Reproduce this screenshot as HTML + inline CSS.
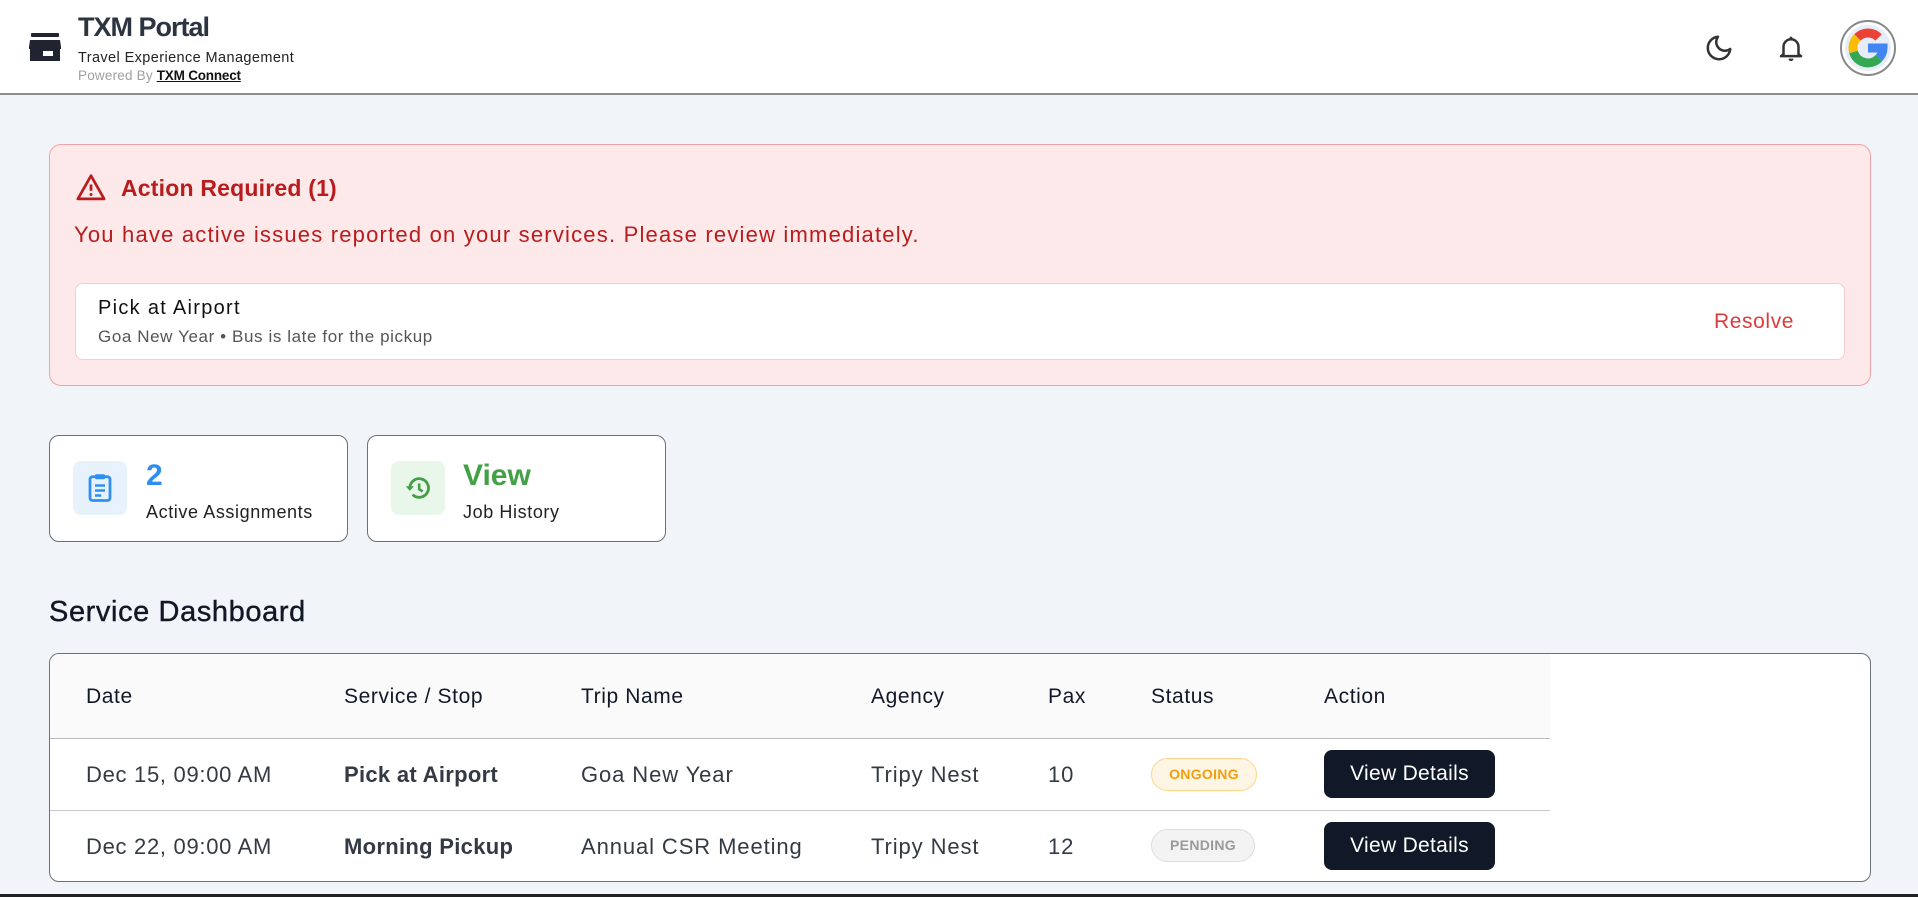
<!DOCTYPE html>
<html><head><meta charset="utf-8"><style>
*{box-sizing:border-box;margin:0;padding:0}
body{width:1918px;height:897px;overflow:hidden;background:#f1f4f8;font-family:"Liberation Sans",Roboto,sans-serif;position:relative;color:#111827}
.a{position:absolute;white-space:nowrap}
.hdr{position:absolute;left:0;top:0;width:1918px;height:95px;background:#fff;border-bottom:2px solid #8a8a8a}
.card{position:absolute;background:#fff;border:1.5px solid #6b6f76;border-radius:10px}
.th{position:absolute;top:685px;font-size:21px;color:#111827;letter-spacing:.6px}
.td{position:absolute;font-size:22px;color:#333a44;letter-spacing:.9px}
.badge{position:absolute;left:1151px;width:106px;height:33px;border-radius:17px;font-size:14px;font-weight:bold;text-align:center;line-height:31px;letter-spacing:.3px}
.btn{position:absolute;left:1324px;width:171px;height:48px;background:#111827;color:#fff;border-radius:8px;font-size:21px;text-align:center;line-height:48px;letter-spacing:.3px}
</style></head><body>
<div class="hdr"></div>
<svg class="a" style="left:29px;top:33px" width="32" height="28" viewBox="0 0 32 28"><rect x="2" y="0" width="28" height="4" rx="1" fill="#1f2430"/><path d="M1 7h30l1 7v2H0v-2z M1 16h30v12H1z" fill="#1f2430"/><rect x="14" y="18" width="10" height="5" fill="#fff"/></svg>
<div class="a" style="left:78px;top:12px;font-size:27px;font-weight:bold;color:#2d3441;letter-spacing:-1px">TXM Portal</div>
<div class="a" style="left:78px;top:50px;font-size:14.5px;color:#222;letter-spacing:.4px">Travel Experience Management</div>
<div class="a" style="left:78px;top:68px;font-size:13.5px;color:#a0a0a0;letter-spacing:.2px">Powered By <span style="color:#111;text-decoration:underline;font-weight:bold;letter-spacing:-.2px">TXM Connect</span></div>
<svg class="a" style="left:1704px;top:33px" width="30" height="30" viewBox="0 0 24 24"><path d="M21 12.8A9 9 0 1 1 11.2 3a7 7 0 0 0 9.8 9.8z" fill="none" stroke="#333" stroke-width="2" stroke-linejoin="round"/></svg>
<svg class="a" style="left:1776px;top:32px" width="30" height="32" viewBox="0 0 24 24"><path d="M6 17V11a6 6 0 0 1 12 0v6l2 1.5H4z M12 3v2" fill="none" stroke="#333" stroke-width="2" stroke-linejoin="round"/><path d="M10 20.5a2 2 0 0 0 4 0z" fill="#333"/></svg>
<div class="a" style="left:1840px;top:20px;width:56px;height:56px;border-radius:50%;border:2px solid #888;background:#fff"></div>
<svg class="a" style="left:1844px;top:24px" width="48" height="48" viewBox="0 0 48 48"><circle cx="24" cy="24" r="23" fill="#e6ecf8"/><path d="M24 9a15 15 0 0 1 10.6 4.4" stroke="#ea4335" stroke-width="9" fill="none"/><path d="M13.4 13.4A15 15 0 0 1 24 9" stroke="#ea4335" stroke-width="9" fill="none"/><path d="M13.4 13.4A15 15 0 0 0 9.5 28" stroke="#fbbc05" stroke-width="9" fill="none"/><path d="M9.5 28A15 15 0 0 0 35 34" stroke="#34a853" stroke-width="9" fill="none"/><path d="M35 34A15 15 0 0 0 39 24H24" stroke="#4285f4" stroke-width="9" fill="none"/></svg>

<div class="a" style="left:49px;top:144px;width:1822px;height:242px;background:#fde8ea;border:1.5px solid #f0a3a8;border-radius:12px"></div>
<svg class="a" style="left:76px;top:173px" width="30" height="28" viewBox="0 0 24 22"><path d="M12 2L1.5 20.5h21z" fill="none" stroke="#b91c1c" stroke-width="2.2" stroke-linejoin="round"/><path d="M12 9v5" stroke="#b91c1c" stroke-width="2.2"/><circle cx="12" cy="17" r="1.2" fill="#b91c1c"/></svg>
<div class="a" style="left:121px;top:175px;font-size:23px;font-weight:bold;color:#b91c1c;letter-spacing:.2px">Action Required (1)</div>
<div class="a" style="left:74px;top:222px;font-size:22px;color:#b91c1c;letter-spacing:1.2px">You have active issues reported on your services. Please review immediately.</div>
<div class="a" style="left:75px;top:283px;width:1770px;height:77px;background:#fff;border:1px solid #f6cdd0;border-radius:8px"></div>
<div class="a" style="left:98px;top:297px;font-size:20px;color:#111;letter-spacing:1.3px">Pick at Airport</div>
<div class="a" style="left:98px;top:327px;font-size:17px;color:#555;letter-spacing:.6px">Goa New Year • Bus is late for the pickup</div>
<div class="a" style="left:1714px;top:310px;font-size:21px;color:#dc3b3b;letter-spacing:.6px">Resolve</div>

<div class="card" style="left:49px;top:435px;width:299px;height:107px"></div>
<div class="a" style="left:73px;top:461px;width:54px;height:54px;border-radius:8px;background:#e7f2fd"></div>
<svg class="a" style="left:87px;top:473px" width="26" height="30" viewBox="0 0 20 24"><rect x="2" y="3" width="16" height="19" rx="2" fill="none" stroke="#2f8ff0" stroke-width="2.2"/><rect x="6" y="1" width="8" height="4" rx="1" fill="#2f8ff0"/><path d="M6 10h8M6 14h8M6 18h5" stroke="#2f8ff0" stroke-width="2"/></svg>
<div class="a" style="left:146px;top:459px;font-size:30px;font-weight:bold;color:#2f8ff0">2</div>
<div class="a" style="left:146px;top:502px;font-size:18px;color:#222;letter-spacing:.6px">Active Assignments</div>

<div class="card" style="left:367px;top:435px;width:299px;height:107px"></div>
<div class="a" style="left:391px;top:461px;width:54px;height:54px;border-radius:8px;background:#e9f6ea"></div>
<svg class="a" style="left:404px;top:474px" width="28" height="28" viewBox="0 0 24 24"><path d="M5 12a8 8 0 1 1 2.4 5.7" fill="none" stroke="#43a047" stroke-width="2.4"/><path d="M1.5 10.5L5 14.5 8.5 10.5z" fill="#43a047"/><path d="M13 8v5l3 2" fill="none" stroke="#43a047" stroke-width="2.2"/></svg>
<div class="a" style="left:463px;top:459px;font-size:30px;font-weight:bold;color:#43a047">View</div>
<div class="a" style="left:463px;top:502px;font-size:18px;color:#222;letter-spacing:.6px">Job History</div>

<div class="a" style="left:49px;top:596px;font-size:29px;color:#111827;letter-spacing:.6px;-webkit-text-stroke:.4px #111827">Service Dashboard</div>

<div class="a" style="left:49px;top:653px;width:1822px;height:229px;background:#fff;border:1.5px solid #6b6f76;border-radius:10px;overflow:hidden">
<div style="position:absolute;left:0;top:0;width:1500px;height:85px;background:#fafafa;border-bottom:1.5px solid #bbb"></div>
<div style="position:absolute;left:0;top:156px;width:1500px;border-bottom:1.5px solid #c8c8c8"></div>
</div>
<div class="th" style="left:86px">Date</div>
<div class="th" style="left:344px">Service / Stop</div>
<div class="th" style="left:581px">Trip Name</div>
<div class="th" style="left:871px">Agency</div>
<div class="th" style="left:1048px">Pax</div>
<div class="th" style="left:1151px">Status</div>
<div class="th" style="left:1324px">Action</div>

<div class="td" style="left:86px;top:762px;letter-spacing:.7px">Dec 15, 09:00 AM</div>
<div class="td" style="left:344px;top:762px;font-weight:bold;letter-spacing:.3px">Pick at Airport</div>
<div class="td" style="left:581px;top:762px">Goa New Year</div>
<div class="td" style="left:871px;top:762px">Tripy Nest</div>
<div class="td" style="left:1048px;top:762px">10</div>
<div class="badge" style="top:758px;background:#fff5e5;border:1px solid #fcd58a;color:#f59e0b">ONGOING</div>
<div class="btn" style="top:750px">View Details</div>

<div class="td" style="left:86px;top:834px;letter-spacing:.7px">Dec 22, 09:00 AM</div>
<div class="td" style="left:344px;top:834px;font-weight:bold;letter-spacing:.3px">Morning Pickup</div>
<div class="td" style="left:581px;top:834px">Annual CSR Meeting</div>
<div class="td" style="left:871px;top:834px">Tripy Nest</div>
<div class="td" style="left:1048px;top:834px">12</div>
<div class="badge" style="top:829px;width:104px;background:#f3f3f3;border:1px solid #ddd;color:#9a9a9a">PENDING</div>
<div class="btn" style="top:822px">View Details</div>
<div class="a" style="left:0;top:894px;width:1918px;height:3px;background:#222"></div>
</body></html>
